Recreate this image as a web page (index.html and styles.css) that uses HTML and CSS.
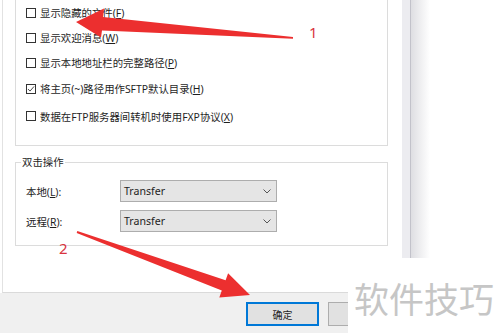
FILE: index.html
```html
<!DOCTYPE html>
<html lang="zh-CN">
<head>
  <meta charset="UTF-8" />
  <title>站点选项</title>
  <link rel="stylesheet" href="styles.css">
</head>
<body>
  <div class="screen">
    <div class="dialog">
      <div class="panel">
        <div class="group group-options">
          <label class="check-row"><span class="box"></span><span>显示隐藏的文件(<u>F</u>)</span></label>
          <label class="check-row"><span class="box"></span><span>显示欢迎消息(<u>W</u>)</span></label>
          <label class="check-row"><span class="box"></span><span>显示本地地址栏的完整路径(<u>P</u>)</span></label>
          <label class="check-row tall">
            <span class="box"><svg viewBox="0 0 10 10" width="8" height="8"><polyline points="1.2,5 3.8,7.6 8.8,1.8" fill="none" stroke="#333" stroke-width="1.1"/></svg></span>
            <span>将主页(~)路径用作SFTP默认目录(<u>H</u>)</span>
          </label>
          <label class="check-row taller"><span class="box"></span><span>数据在FTP服务器间转机时使用FXP协议(<u>X</u>)</span></label>
        </div>

        <fieldset class="group group-dblclick">
          <legend>双击操作</legend>
          <div class="field-row">
            <span class="field-label">本地(<u>L</u>):</span>
            <div class="select">
              <span>Transfer</span>
              <svg viewBox="0 0 8 5" width="8" height="5"><polyline points="0.5,0.5 4,4 7.5,0.5" fill="none" stroke="#555" stroke-width="1"/></svg>
            </div>
          </div>
          <div class="field-row">
            <span class="field-label">远程(<u>R</u>):</span>
            <div class="select">
              <span>Transfer</span>
              <svg viewBox="0 0 8 5" width="8" height="5"><polyline points="0.5,0.5 4,4 7.5,0.5" fill="none" stroke="#555" stroke-width="1"/></svg>
            </div>
          </div>
        </fieldset>
      </div>

      <div class="button-bar">
        <button class="btn btn-default">确定</button>
        <button class="btn"></button>
      </div>
    </div>
    <div class="window-edge"></div>
  </div>

  <!-- red annotations drawn over the screenshot -->
  <svg class="annotations" viewBox="0 0 500 333" width="500" height="333">
    <polygon points="76,22 104,8.5 103,17 293,37 293,38.8 102,30.5 101,37.5" fill="#ec2f2f"/>
    <polygon points="250,295 228.1,273.2 225.6,280.2 77.3,231.1 76.7,232.9 221.8,290.6 219.3,297.6" fill="#ec2f2f"/>
    <text x="309" y="38" class="mark">1</text>
    <text x="59" y="254" class="mark">2</text>
  </svg>

  <div class="watermark">软件技巧</div>
</body>
</html>
```

FILE: styles.css
```css
body {
  margin: 0;
  width: 500px;
  height: 333px;
  overflow: hidden;
  position: relative;
  background: #fff;
  font-family: "Noto Sans", "Noto Sans CJK SC", sans-serif;
  font-size: 10.4px;
  color: #1e1e1e;
}

u {
  text-decoration-thickness: 1px;
  text-underline-offset: 1px;
}

.screen {
  display: flex;
  align-items: flex-start;
}

.dialog {
  width: 402px;
  display: flex;
  flex-direction: column;
}

.panel {
  height: 293px;
  box-sizing: border-box;
  margin-left: 2px;
  padding: 0 14px 0 12px;
  background: #fff;
  border-left: 1px solid #e2e2e2;
  border-bottom: 1px solid #dadada;
}

.group {
  border: 1px solid #dcdcdc;
}

/* Option checkboxes */
.group-options {
  border-top: none;
  height: 146px;
  box-sizing: border-box;
  padding-left: 10px;
}

.check-row {
  display: flex;
  align-items: center;
  gap: 4px;
  height: 25px;
}
.check-row.tall {
  height: 27px;
}
.check-row.taller {
  height: 28px;
}

.box {
  width: 10px;
  height: 10px;
  box-sizing: border-box;
  border: 1px solid #333;
  background: #fff;
  display: flex;
  align-items: center;
  justify-content: center;
  flex-shrink: 0;
}

/* Double click group */
.group-dblclick {
  margin: 9px 0 0;
  padding: 11px 0 13px 5px;
  min-inline-size: 0;
}
.group-dblclick legend {
  padding: 0 1px;
  line-height: 14px;
}

.field-row {
  display: flex;
  align-items: center;
  height: 22px;
}
.field-row + .field-row {
  margin-top: 8px;
}

.field-label {
  width: 99px;
  box-sizing: border-box;
  padding-left: 5px;
}

.select {
  width: 157px;
  height: 22px;
  box-sizing: border-box;
  border: 1px solid #adadad;
  background: #e5e5e5;
  display: flex;
  align-items: center;
  justify-content: space-between;
  padding: 0 5px 0 3px;
  font-size: 10.6px;
}

/* Buttons */
.button-bar {
  height: 40px;
  box-sizing: border-box;
  background: #f0f0f0;
  display: flex;
  justify-content: flex-end;
  gap: 9px;
  padding: 9px 1px 0 0;
}

.btn {
  width: 73px;
  height: 24px;
  box-sizing: border-box;
  border: 1px solid #adadad;
  background: #e1e1e1;
  font-family: inherit;
  font-size: 10px;
  color: #1e1e1e;
  padding: 0;
}
.btn-default {
  border-color: #0078d7;
  box-shadow: inset 0 0 0 1px #0078d7;
}

/* Edge of the window behind */
.window-edge {
  width: 28px;
  height: 258px;
  background: linear-gradient(to right, #ececf0 0 8px, #c2c2ca 8px 9px, #dedee2 9px, #fff 28px);
}

.annotations {
  position: absolute;
  left: 0;
  top: 0;
  pointer-events: none;
}
.mark {
  font-family: "Noto Sans", sans-serif;
  font-size: 15px;
  fill: #d9343f;
}

.watermark {
  position: absolute;
  left: 348px;
  top: 262px;
  width: 152px;
  height: 71px;
  background: #fff;
  display: flex;
  align-items: center;
  justify-content: center;
  font-size: 35px;
  color: #c6c6c6;
}
```
